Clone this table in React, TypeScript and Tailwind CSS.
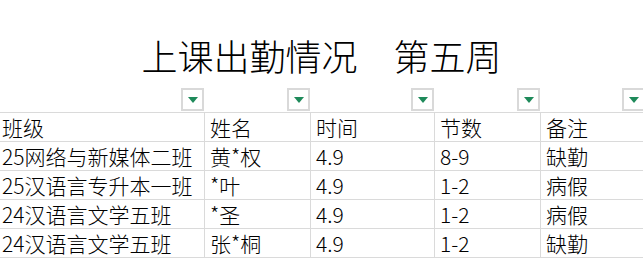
import React from "react";

const rows = [
  ["25网络与新媒体二班", "黄*权", "4.9", "8-9", "缺勤"],
  ["25汉语言专升本一班", "*叶", "4.9", "1-2", "病假"],
  ["24汉语言文学五班", "*圣", "4.9", "1-2", "病假"],
  ["24汉语言文学五班", "张*桐", "4.9", "1-2", "缺勤"],
];

const header = ["班级", "姓名", "时间", "节数", "备注"];

// column widths incl. right grid line
const cols = "grid grid-cols-[205px_106px_124px_106px_105px]";

function FilterButton() {
  return (
    <div className="flex h-[23px] w-[23px] items-center justify-center border-2 border-[#d9d9d9] bg-white">
      <svg width="10" height="6" viewBox="0 0 10 6">
        <path d="M0 0 H10 L5 6 Z" fill="#1e8a5a" />
      </svg>
    </div>
  );
}

export default function App() {
  return (
    <div
      className="h-[258px] w-[643px] overflow-hidden bg-white text-black"
      style={{ fontFamily: '"Noto Sans CJK SC", sans-serif' }}
    >
      <div className="flex h-[88px] items-start justify-center pt-[30px] text-[36px] leading-[50px] font-light">
        上课出勤情况　第五周
      </div>

      <div className={`${cols} h-[24px]`}>
        {header.map((h) => (
          <div key={h} className="flex justify-end pr-[1px]">
            <FilterButton />
          </div>
        ))}
      </div>

      <div className={`${cols} border-t border-[#dadada] text-[21px] font-light`}>
        {header.map((h, i) => (
          <div
            key={h}
            className={`h-[29px] border-b border-r border-[#dadada] leading-[28px] whitespace-nowrap ${
              i === 0 ? "pl-[2px]" : "pl-[5px]"
            }`}
          >
            {h}
          </div>
        ))}
        {rows.map((r, ri) =>
          r.map((c, ci) => (
            <div
              key={`${ri}-${ci}`}
              className={`h-[29px] border-b border-r border-[#dadada] leading-[28px] whitespace-nowrap ${
                ci === 0 ? "pl-[2px]" : "pl-[5px]"
              }`}
            >
              {c}
            </div>
          ))
        )}
      </div>
    </div>
  );
}
